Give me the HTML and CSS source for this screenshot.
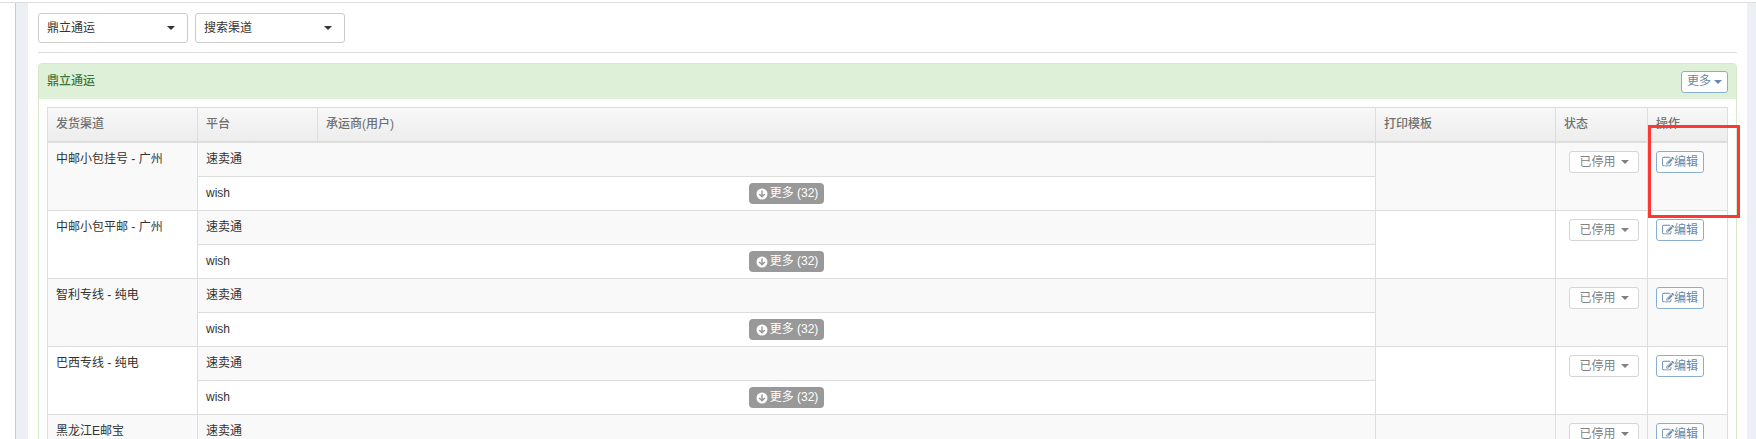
FILE: index.html
```html
<!DOCTYPE html>
<html lang="zh-CN">
<head>
  <meta charset="UTF-8" />
  <meta name="viewport" content="width=device-width, initial-scale=1.0"/>
  <title>鼎立通运</title>
  <link rel="stylesheet" href="styles.css">
</head>
<body>

  <!-- Icons -->
  <svg class="sprite" aria-hidden="true">
    <symbol id="icon-edit" viewBox="0 0 1792 1792">
      <path fill="currentColor" d="M888 1184l116-116-152-152-116 116v56h96v96h56zm440-720q-16-16-33 1l-350 350q-17 17-1 33t33-1l350-350q17-17 1-33zm80 594v190q0 119-84.5 203.5t-203.5 84.5h-832q-119 0-203.5-84.5t-84.5-203.5v-832q0-119 84.5-203.5t203.5-84.5h832q63 0 117 25 15 7 18 23 3 17-9 29l-49 49q-14 14-32 8-23-6-45-6h-832q-66 0-113 47t-47 113v832q0 66 47 113t113 47h832q66 0 113-47t47-113v-126q0-13 9-22l64-64q15-15 35-7t20 29zm-96-738l288 288-672 672h-288v-288zm444 132l-92 92-288-288 92-92q28-28 68-28t68 28l152 152q28 28 28 68t-28 68z"/>
    </symbol>
    <symbol id="icon-down" viewBox="0 0 12 12">
      <circle cx="6" cy="6" r="5.5" fill="#fff"/>
      <path d="M6 2.5v6M3.2 6L6 8.8 8.8 6" fill="none" stroke="#999" stroke-width="1.5"/>
    </symbol>
  </svg>

  <div class="shell">
    <div class="sidebar"></div>
    <main class="content">

      <div class="filters">
        <div class="picker">
          <select aria-label="物流公司"><option>鼎立通运</option></select>
        </div>
        <div class="picker">
          <select aria-label="渠道"><option>搜索渠道</option></select>
        </div>
      </div>

      <section class="panel">
        <div class="panel-heading">
          <h3>鼎立通运</h3>
          <button class="btn btn-blue">更多<span class="caret"></span></button>
        </div>
        <div class="panel-body">
          <table>
            <colgroup>
              <col class="col-channel"><col class="col-platform"><col><col class="col-template"><col class="col-status"><col class="col-action">
            </colgroup>
            <thead>
              <tr>
                <th>发货渠道</th>
                <th>平台</th>
                <th>承运商(用户)</th>
                <th>打印模板</th>
                <th>状态</th>
                <th>操作</th>
              </tr>
            </thead>
            <tbody>
              <tr>
                <td rowspan="2">中邮小包挂号 - 广州</td>
                <td colspan="2" class="platform">速卖通</td>
                <td rowspan="2"></td>
                <td rowspan="2"><button class="btn btn-status">已停用<span class="caret"></span></button></td>
                <td rowspan="2" class="marked"><button class="btn btn-blue"><svg class="icon"><use href="#icon-edit"/></svg>编辑</button><span class="marker"></span></td>
              </tr>
              <tr>
                <td colspan="2" class="platform"><div class="split"><span>wish</span><button class="more"><svg class="icon"><use href="#icon-down"/></svg>更多 (32)</button></div></td>
              </tr>
            </tbody>
            <tbody>
              <tr>
                <td rowspan="2">中邮小包平邮 - 广州</td>
                <td colspan="2" class="platform">速卖通</td>
                <td rowspan="2"></td>
                <td rowspan="2"><button class="btn btn-status">已停用<span class="caret"></span></button></td>
                <td rowspan="2"><button class="btn btn-blue"><svg class="icon"><use href="#icon-edit"/></svg>编辑</button></td>
              </tr>
              <tr>
                <td colspan="2" class="platform"><div class="split"><span>wish</span><button class="more"><svg class="icon"><use href="#icon-down"/></svg>更多 (32)</button></div></td>
              </tr>
            </tbody>
            <tbody>
              <tr>
                <td rowspan="2">智利专线 - 纯电</td>
                <td colspan="2" class="platform">速卖通</td>
                <td rowspan="2"></td>
                <td rowspan="2"><button class="btn btn-status">已停用<span class="caret"></span></button></td>
                <td rowspan="2"><button class="btn btn-blue"><svg class="icon"><use href="#icon-edit"/></svg>编辑</button></td>
              </tr>
              <tr>
                <td colspan="2" class="platform"><div class="split"><span>wish</span><button class="more"><svg class="icon"><use href="#icon-down"/></svg>更多 (32)</button></div></td>
              </tr>
            </tbody>
            <tbody>
              <tr>
                <td rowspan="2">巴西专线 - 纯电</td>
                <td colspan="2" class="platform">速卖通</td>
                <td rowspan="2"></td>
                <td rowspan="2"><button class="btn btn-status">已停用<span class="caret"></span></button></td>
                <td rowspan="2"><button class="btn btn-blue"><svg class="icon"><use href="#icon-edit"/></svg>编辑</button></td>
              </tr>
              <tr>
                <td colspan="2" class="platform"><div class="split"><span>wish</span><button class="more"><svg class="icon"><use href="#icon-down"/></svg>更多 (32)</button></div></td>
              </tr>
            </tbody>
            <tbody>
              <tr>
                <td>黑龙江E邮宝</td>
                <td colspan="2" class="platform">速卖通</td>
                <td></td>
                <td><button class="btn btn-status">已停用<span class="caret"></span></button></td>
                <td><button class="btn btn-blue"><svg class="icon"><use href="#icon-edit"/></svg>编辑</button></td>
              </tr>
            </tbody>
          </table>
        </div>
      </section>

    </main>
  </div>

</body>
</html>
```

FILE: styles.css
```css
* { box-sizing: border-box; }
body {
  margin: 0;
  height: 100vh;
  overflow: hidden;
  padding-top: 2px;
  background: #fff;
  color: #333;
  font: 12px/17px "Liberation Sans", "Noto Sans CJK SC", sans-serif;
}
button, select { font: inherit; cursor: pointer; }
.sprite { position: absolute; width: 0; height: 0; }

.shell {
  display: flex;
  height: 100%;
  border-top: 1px solid #ddd;
  background: #ecf0f5;
}
.sidebar {
  flex: 0 0 16px;
  background: #fff;
  border-right: 1px solid #ccc;
}
.content {
  flex: 1;
  min-width: 0;
  margin: 0 9px 0 12px;
  padding: 10px 10px 0;
  background: #fff;
}

.filters {
  display: flex;
  gap: 7px;
  padding-bottom: 9px;
  margin-bottom: 10px;
  border-bottom: 1px solid #ddd;
}
.picker { position: relative; width: 150px; }
.picker select {
  display: block;
  width: 100%;
  height: 30px;
  padding: 1px 8px 0;
  appearance: none;
  border: 1px solid #ccc;
  border-radius: 3px;
  background: #fff;
  color: #333;
}
.picker::after {
  content: "";
  position: absolute;
  right: 13px;
  top: 13px;
  border: 4px solid transparent;
  border-top-color: #333;
  border-bottom: 0;
  pointer-events: none;
}
.caret {
  border: 4px solid transparent;
  border-top-color: currentColor;
  border-bottom: 0;
}

.panel {
  border: 1px solid #d6e9c6;
  border-radius: 4px;
}
.panel-heading {
  display: flex;
  align-items: center;
  justify-content: space-between;
  height: 35px;
  padding: 0 8px;
  background: #dff0d8;
}
.panel-heading h3 { margin: 0; font-size: 12px; font-weight: 500; color: #3c763d; }
.panel-body { padding: 8px; }

table {
  width: 100%;
  table-layout: fixed;
  border-collapse: collapse;
}
.col-channel { width: 150px; }
.col-platform { width: 120px; }
.col-template { width: 180px; }
.col-status { width: 92px; }
.col-action { width: 80px; }
thead tr { background: linear-gradient(#f8f8f8, #ececec); }
th, td {
  padding: 8px;
  border: 1px solid #ddd;
  text-align: left;
  vertical-align: top;
}
th { border-bottom-width: 2px; font-weight: 500; color: #707070; }
tbody:nth-of-type(odd) td { background: #f9f9f9; }
tbody tr .platform { height: 34px; background: #fff; }
tbody tr:first-child .platform { background: #f9f9f9; }
tbody tr:last-child:not(:first-child) .platform { padding: 0 8px; vertical-align: middle; background: #fff; }

.split {
  display: grid;
  grid-template-columns: 1fr auto 1fr;
  align-items: center;
}
.btn {
  display: flex;
  align-items: center;
  justify-content: center;
  height: 22px;
  padding: 0 5px;
  border: 1px solid #8aafce;
  border-radius: 3px;
  background: #fff;
  color: #6688a6;
}
.btn-blue .caret { margin-left: 3px; }
.btn-status {
  width: 70px;
  margin-left: 5px;
  border-color: #d5d5d5;
  color: #808080;
}
.btn-status .caret { margin-left: 5px; }
.icon { width: 12px; height: 12px; }
.more {
  display: flex;
  align-items: center;
  gap: 2px;
  height: 21px;
  padding: 0 6px 0 7px;
  border: 0;
  border-radius: 4px;
  background: #999;
  color: #fff;
}

/* red frame around the first edit cell */
td.marked { position: relative; }
.marker {
  position: absolute;
  top: -18px;
  right: -13px;
  bottom: -8px;
  left: 0;
  border: 3px solid #fc3835;
  pointer-events: none;
}
```
